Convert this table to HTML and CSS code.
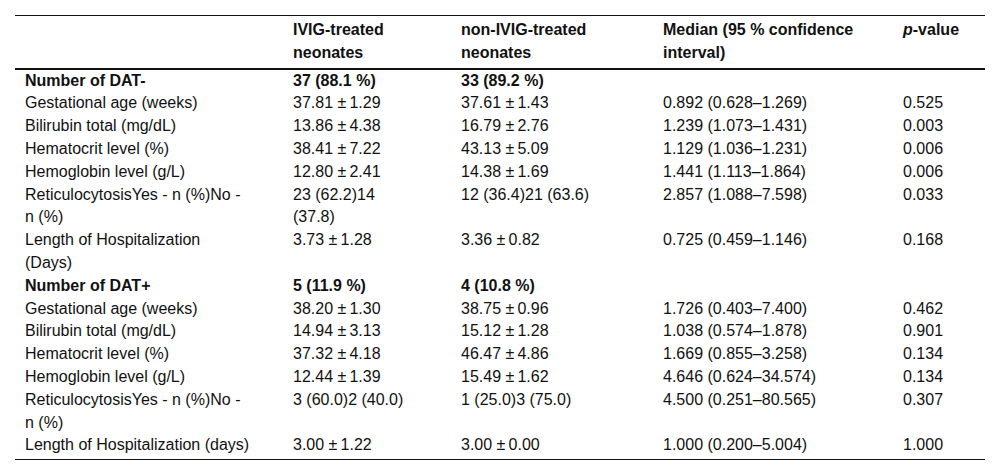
FILE: index.html
```html
<!DOCTYPE html>
<html lang="en">
<head>
<meta charset="utf-8">
<title>DAT table</title>
<link rel="stylesheet" href="styles.css">
</head>
<body>
<table class="data">
  <colgroup>
    <col class="c1"><col class="c2"><col class="c3"><col class="c4"><col class="c5">
  </colgroup>
  <thead>
    <tr>
      <th></th>
      <th>IVIG-treated neonates</th>
      <th>non-IVIG-treated neonates</th>
      <th>Median (95 % confidence interval)</th>
      <th><i>p</i>-value</th>
    </tr>
  </thead>
  <tbody>
    <tr class="section">
      <td>Number of DAT-</td><td>37 (88.1 %)</td><td>33 (89.2 %)</td><td></td><td></td>
    </tr>
    <tr><td>Gestational age (weeks)</td><td>37.81 ±&thinsp;1.29</td><td>37.61 ±&thinsp;1.43</td><td>0.892 (0.628–1.269)</td><td>0.525</td></tr>
    <tr><td>Bilirubin total (mg/dL)</td><td>13.86 ±&thinsp;4.38</td><td>16.79 ±&thinsp;2.76</td><td>1.239 (1.073–1.431)</td><td>0.003</td></tr>
    <tr><td>Hematocrit level (%)</td><td>38.41 ±&thinsp;7.22</td><td>43.13 ±&thinsp;5.09</td><td>1.129 (1.036–1.231)</td><td>0.006</td></tr>
    <tr><td>Hemoglobin level (g/L)</td><td>12.80 ±&thinsp;2.41</td><td>14.38 ±&thinsp;1.69</td><td>1.441 (1.113–1.864)</td><td>0.006</td></tr>
    <tr><td>ReticulocytosisYes - n (%)No - n (%)</td><td>23 (62.2)14 (37.8)</td><td>12 (36.4)21 (63.6)</td><td>2.857 (1.088–7.598)</td><td>0.033</td></tr>
    <tr><td>Length of Hospitalization (Days)</td><td>3.73 ±&thinsp;1.28</td><td>3.36 ±&thinsp;0.82</td><td>0.725 (0.459–1.146)</td><td>0.168</td></tr>
    <tr class="section">
      <td>Number of DAT+</td><td>5 (11.9 %)</td><td>4 (10.8 %)</td><td></td><td></td>
    </tr>
    <tr><td>Gestational age (weeks)</td><td>38.20 ±&thinsp;1.30</td><td>38.75 ±&thinsp;0.96</td><td>1.726 (0.403–7.400)</td><td>0.462</td></tr>
    <tr><td>Bilirubin total (mg/dL)</td><td>14.94 ±&thinsp;3.13</td><td>15.12 ±&thinsp;1.28</td><td>1.038 (0.574–1.878)</td><td>0.901</td></tr>
    <tr><td>Hematocrit level (%)</td><td>37.32 ±&thinsp;4.18</td><td>46.47 ±&thinsp;4.86</td><td>1.669 (0.855–3.258)</td><td>0.134</td></tr>
    <tr><td>Hemoglobin level (g/L)</td><td>12.44 ±&thinsp;1.39</td><td>15.49 ±&thinsp;1.62</td><td>4.646 (0.624–34.574)</td><td>0.134</td></tr>
    <tr><td>ReticulocytosisYes - n (%)No - n (%)</td><td>3 (60.0)2 (40.0)</td><td>1 (25.0)3 (75.0)</td><td>4.500 (0.251–80.565)</td><td>0.307</td></tr>
    <tr class="last"><td>Length of Hospitalization (days)</td><td>3.00 ±&thinsp;1.22</td><td>3.00 ±&thinsp;0.00</td><td>1.000 (0.200–5.004)</td><td>1.000</td></tr>
  </tbody>
</table>
</body>
</html>
```

FILE: styles.css
```css
html, body {
  margin: 0;
  padding: 0;
  background: #fff;
}

body {
  font-family: "Liberation Sans", Arial, sans-serif;
  font-size: 16px;
  color: #111;
}

.data {
  margin: 15px;
  width: 970px;
  table-layout: fixed;
  border-collapse: collapse;
  border-top: 1px solid #111;
  border-bottom: 1px solid #111;
}

.c1 { width: 268px; }
.c2 { width: 168px; }
.c3 { width: 202px; }
.c4 { width: 240px; }
.c5 { width: 92px; }

.data th,
.data td {
  text-align: left;
  vertical-align: top;
  padding: 0 32px 0 10px;
  line-height: 22.8px;
}

.data th:last-child,
.data td:last-child {
  padding-right: 0;
}

.data th {
  font-weight: bold;
  padding-top: 3px;
  padding-bottom: 3px;
}

.data thead tr {
  border-bottom: 2px solid #111;
}

.data .section td {
  font-weight: bold;
}

.data .last td {
  padding-bottom: 2px;
}
```
